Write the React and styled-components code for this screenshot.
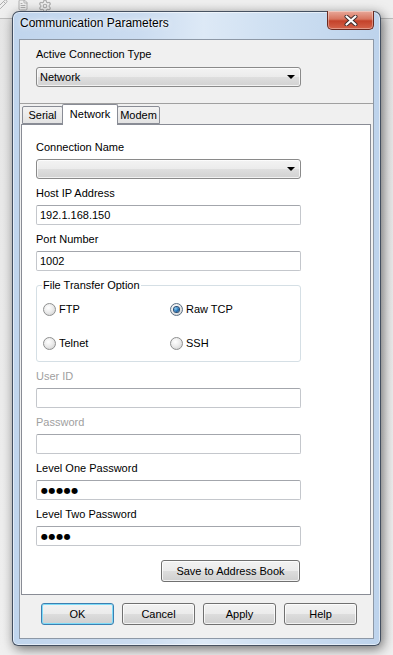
import React from "react";
import styled, { createGlobalStyle } from "styled-components";
import { Pencil, FileText, Settings } from "lucide-react";

const GlobalStyle = createGlobalStyle`
  html, body {
    margin: 0;
    padding: 0;
  }
  body {
    background: #ececec;
    font-family: "Liberation Sans", Arial, sans-serif;
  }
`;

const Desktop = styled.div`
  position: relative;
  width: 393px;
  height: 655px;
  overflow: hidden;
  background: linear-gradient(#e6e6e6, #f0f0f0);
`;

const Toolbar = styled.div`
  height: 19px;
  box-sizing: border-box;
  border-bottom: 1px solid #a2a2a2;
  background: #f6f6f6;
  display: flex;
  align-items: flex-start;
  gap: 9px;
  color: #8a8a8a;
  opacity: 0.6;
  svg {
    margin-top: -1px;
  }
`;

const Window = styled.div`
  position: absolute;
  left: 12px;
  top: 11px;
  width: 369px;
  height: 635px;
  box-sizing: border-box;
  border: 1px solid rgba(35, 45, 60, 0.8);
  border-radius: 7px 7px 6px 6px;
  padding: 0 6px 6px;
  display: flex;
  flex-direction: column;
  background: linear-gradient(
      to right,
      #c0d5ed 0%,
      #cbdcf0 35%,
      #dde9f6 52%,
      #cfe0f2 70%,
      #bdd3ec 100%
    );
  box-shadow: inset 0 0 0 1px rgba(255, 255, 255, 0.55),
    2px 3px 12px rgba(0, 0, 0, 0.55);
`;

const TitleBar = styled.div`
  height: 27px;
  display: flex;
  align-items: flex-start;
  justify-content: space-between;
`;

const Title = styled.div`
  padding: 4px 0 0 1px;
  font-size: 12px;
  line-height: 14px;
  color: #000;
  text-shadow: 0 0 6px rgba(255, 255, 255, 0.95), 0 0 2px #fff;
`;

const CloseButton = styled.div`
  width: 47px;
  height: 19px;
  margin-top: -1px;
  box-sizing: border-box;
  border: 1px solid #6b2a20;
  border-top: none;
  border-radius: 0 0 5px 5px;
  background: linear-gradient(#e9a99a 0%, #d7755f 45%, #c4422a 55%, #d4634a 100%);
  box-shadow: inset 0 0 0 1px rgba(255, 255, 255, 0.35);
  display: flex;
  align-items: center;
  justify-content: center;
`;

const Client = styled.div`
  flex: 1;
  display: flex;
  flex-direction: column;
  border: 1px solid #8d98a6;
  background: #f0f0f0;
`;

const TopSection = styled.div`
  padding: 7px 0 16px 16px;
  border-bottom: 1px solid #a0a0a0;
  display: flex;
  flex-direction: column;
  gap: 6px;
`;

const Label = styled.div`
  font-size: 11px;
  line-height: 14px;
  color: ${(p) => (p.$disabled ? "#a0a0a0" : "#000")};
  white-space: nowrap;
`;

const Combo = styled.div`
  width: 265px;
  height: 20px;
  box-sizing: border-box;
  border: 1px solid #8a8a8a;
  border-radius: 3px;
  background: linear-gradient(#f3f3f3 0%, #ebebeb 50%, #dedede 51%, #d2d2d2 100%);
  box-shadow: inset 0 0 0 1px rgba(255, 255, 255, 0.7);
  display: flex;
  align-items: center;
  justify-content: space-between;
  padding: 0 5px 0 3px;
  font-size: 11px;
  color: #000;
`;

const Arrow = styled.span`
  width: 0;
  height: 0;
  border-left: 4px solid transparent;
  border-right: 4px solid transparent;
  border-top: 4px solid #000;
`;

const TabArea = styled.div`
  display: flex;
  flex-direction: column;
  margin: 0 2px 0 1px;
`;

const TabStrip = styled.div`
  height: 20px;
  display: flex;
  align-items: flex-end;
  padding-left: 1px;
`;

const Tab = styled.div`
  position: relative;
  z-index: ${(p) => (p.$active ? 2 : 1)};
  width: ${(p) => p.$w}px;
  height: ${(p) => (p.$active ? 21 : 18)}px;
  margin-bottom: ${(p) => (p.$active ? -1 : 0)}px;
  margin-left: -1px;
  box-sizing: border-box;
  border: 1px solid #898c95;
  border-bottom: ${(p) => (p.$active ? "none" : "1px solid #898c95")};
  border-radius: 2px 2px 0 0;
  background: ${(p) =>
    p.$active ? "#fff" : "linear-gradient(#f3f3f3, #e3e3e3)"};
  display: flex;
  align-items: ${(p) => (p.$active ? "flex-start" : "center")};
  padding-top: ${(p) => (p.$active ? 3 : 0)}px;
  justify-content: center;
  font-size: 11px;
  color: #000;
  &:first-child {
    margin-left: 0;
  }
`;

const Panel = styled.div`
  border: 1px solid #898c95;
  background: #fff;
  padding: 15px 0 12px 14px;
  display: flex;
  flex-direction: column;
  gap: 7px;
`;

const Field = styled.div`
  display: flex;
  flex-direction: column;
  gap: 5px;
`;

const TextBox = styled.div`
  width: 265px;
  height: 20px;
  box-sizing: border-box;
  border: 1px solid #c4c7cc;
  border-top-color: #a3a6ac;
  border-radius: 2px;
  background: #fff;
  padding: 0 3px;
  display: flex;
  align-items: center;
  font-size: 11px;
  color: #000;
`;

const Dots = styled.span`
  font-family: "DejaVu Sans", sans-serif;
  font-size: 8px;
  letter-spacing: 0.6px;
  margin-left: 1px;
`;

const Group = styled.fieldset`
  width: 265px;
  box-sizing: border-box;
  margin: 0;
  padding: 0 5px 8px;
  border: 1px solid #d5dfe5;
  border-radius: 3px;
`;

const Legend = styled.legend`
  padding: 0 1px;
  font-size: 11px;
  line-height: 14px;
  color: #000;
`;

const RadioGrid = styled.div`
  display: grid;
  grid-template-columns: 127px 1fr;
  row-gap: 14px;
  padding: 7px 0 0 1px;
`;

const RadioItem = styled.label`
  height: 20px;
  display: flex;
  align-items: center;
  gap: 3px;
  font-size: 11px;
  color: #000;
`;

const RadioCircle = styled.span`
  width: 13px;
  height: 13px;
  box-sizing: border-box;
  border-radius: 50%;
  border: 1px solid ${(p) => (p.$checked ? "#5b6f83" : "#8e8f8f")};
  background: radial-gradient(
    circle at 40% 35%,
    #ffffff 0%,
    #ececec 45%,
    #cbcbcb 100%
  );
  display: flex;
  align-items: center;
  justify-content: center;
  &::after {
    content: "";
    display: ${(p) => (p.$checked ? "block" : "none")};
    width: 5px;
    height: 5px;
    border-radius: 50%;
    background: radial-gradient(circle at 35% 35%, #8fd0f5 0%, #1d6fb5 55%, #0e3e6e 100%);
    box-shadow: 0 0 0 1px #284d74;
  }
`;

const SaveRow = styled.div`
  width: 264px;
  display: flex;
  justify-content: flex-end;
  margin-top: 7px;
`;

const Button = styled.div`
  width: ${(p) => p.$w || 73}px;
  height: 22px;
  box-sizing: border-box;
  border: 1px solid ${(p) => (p.$default ? "#3c7fb1" : "#707070")};
  border-radius: 3px;
  background: linear-gradient(#f2f2f2 0%, #ebebeb 50%, #dddddd 51%, #cfcfcf 100%);
  box-shadow: inset 0 0 0 1px
    ${(p) => (p.$default ? "#7edbf8" : "rgba(255, 255, 255, 0.75)")};
  display: flex;
  align-items: center;
  justify-content: center;
  font-size: 11px;
  color: #000;
`;

const ButtonBar = styled.div`
  display: flex;
  gap: 8px;
  padding: 8px 0 11px 21px;
`;

const CloseGlyph = () => (
  <svg width="14" height="11" viewBox="0 0 14 11">
    <path
      d="M2.5 1.5 L11.5 9.5 M11.5 1.5 L2.5 9.5"
      stroke="#3a2a2a"
      strokeWidth="4"
      strokeLinecap="round"
    />
    <path
      d="M2.5 1.5 L11.5 9.5 M11.5 1.5 L2.5 9.5"
      stroke="#ffffff"
      strokeWidth="2.2"
      strokeLinecap="round"
    />
  </svg>
);

const TextField = ({ label, value, disabled, secret }) => (
  <Field>
    <Label $disabled={disabled}>{label}</Label>
    <TextBox>{secret ? <Dots>{value}</Dots> : value}</TextBox>
  </Field>
);

const Radio = ({ label, checked }) => (
  <RadioItem>
    <RadioCircle $checked={checked} />
    {label}
  </RadioItem>
);

const App = () => {
  return (
    <>
      <GlobalStyle />
      <Desktop>
        <Toolbar>
          <Pencil size={12} style={{ marginLeft: -4 }} />
          <FileText size={12} />
          <Settings size={14} />
        </Toolbar>
        <Window>
          <TitleBar>
            <Title>Communication Parameters</Title>
            <CloseButton>
              <CloseGlyph />
            </CloseButton>
          </TitleBar>
          <Client>
            <TopSection>
              <Label>Active Connection Type</Label>
              <Combo>
                Network
                <Arrow />
              </Combo>
            </TopSection>
            <TabArea>
              <TabStrip>
                <Tab $w={41}>Serial</Tab>
                <Tab $w={56} $active>
                  Network
                </Tab>
                <Tab $w={43}>Modem</Tab>
              </TabStrip>
              <Panel>
                <Field>
                  <Label>Connection Name</Label>
                  <Combo>
                    <span />
                    <Arrow />
                  </Combo>
                </Field>
                <TextField label="Host IP Address" value="192.1.168.150" />
                <TextField label="Port Number" value="1002" />
                <Group>
                  <Legend>File Transfer Option</Legend>
                  <RadioGrid>
                    <Radio label="FTP" />
                    <Radio label="Raw TCP" checked />
                    <Radio label="Telnet" />
                    <Radio label="SSH" />
                  </RadioGrid>
                </Group>
                <TextField label="User ID" value="" disabled />
                <TextField label="Password" value="" disabled />
                <TextField label="Level One Password" value="●●●●●" secret />
                <TextField label="Level Two Password" value="●●●●" secret />
                <SaveRow>
                  <Button $w={139}>Save to Address Book</Button>
                </SaveRow>
              </Panel>
            </TabArea>
            <ButtonBar>
              <Button $default>OK</Button>
              <Button>Cancel</Button>
              <Button>Apply</Button>
              <Button>Help</Button>
            </ButtonBar>
          </Client>
        </Window>
      </Desktop>
    </>
  );
};

export default App;
